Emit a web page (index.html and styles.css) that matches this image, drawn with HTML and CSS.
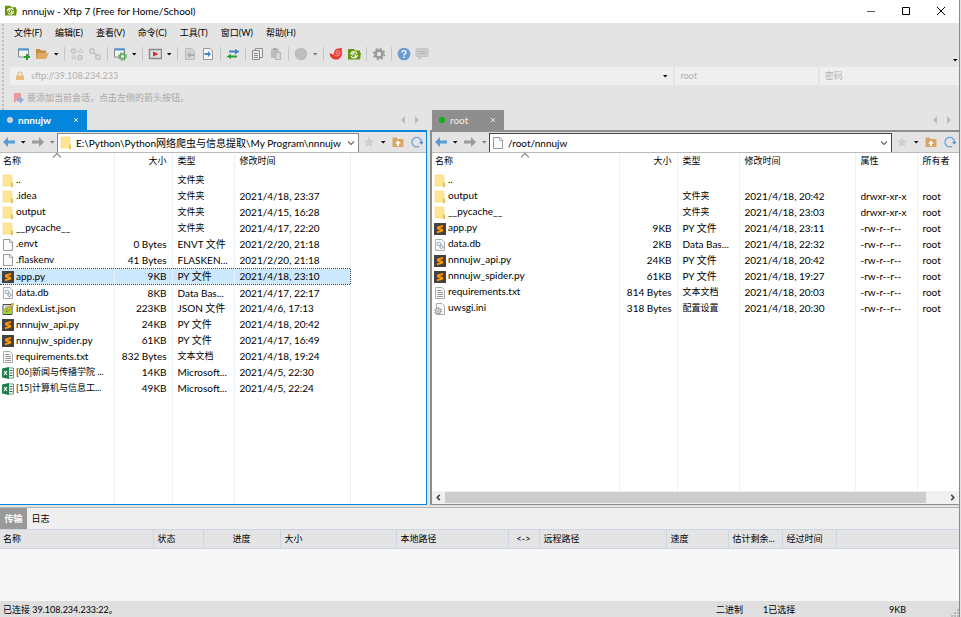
FILE: index.html
```
<!DOCTYPE html>
<html lang="zh-CN">
<head>
    <meta charset="UTF-8">
    <meta name="viewport" content="width=device-width, initial-scale=1.0">
    <title>nnnujw - Xftp 7 (Free for Home/School)</title>
    <link rel="stylesheet" href="styles.css">
</head>
<body>
    <!-- Shared icons -->
    <svg class="sprite">
        <symbol id="xftp" viewBox="0 0 14 14"><path d="M1 2h6l1 1.500h5v2l1 .5-1 6.500H1z" fill="#69960a"/><circle cx="7" cy="7.800" r="3.200" fill="none" stroke="#fff" stroke-width="1.200" stroke-dasharray="8.500 1.500"/><path d="M5.800 8.500V6.300h1.500M8.300 7v2.200H7" fill="none" stroke="#fff" stroke-width="1.100"/></symbol>
        <symbol id="caret" viewBox="0 0 6 6"><path d="M1 2h4.500L3.200 4.500z" fill="currentColor"/></symbol>
        <symbol id="folder" viewBox="0 0 12 14"><path d="M1 1h9v11H1z" fill="#ffe594"/><path d="M1 1h9v11H1z" fill="none" stroke="#f5d77b" stroke-width=".6"/><path d="M9.500 8.500h1.500V13H9z" fill="#e8bd4a"/></symbol>
        <symbol id="file" viewBox="0 0 12 14"><path d="M1.500 1.500H8L10.500 4v8.500h-9z" fill="#fbfbfb" stroke="#999"/><path d="M7.500 1.500v3h3" fill="none" stroke="#999" stroke-width=".8"/></symbol>
        <symbol id="py" viewBox="0 0 12 14"><path d="M0 1h12v12H0z" fill="#434343"/><path d="M9 3v2L5.500 6 9 7v2.500l-6 1.800v-2l3.300-1L3 7.200V4.800z" fill="#ff9800"/></symbol>
        <symbol id="db" viewBox="0 0 12 14"><path d="M1.500 1.500H8L10.500 4v8.500h-9z" fill="#fbfbfb" stroke="#aaa"/><circle cx="5" cy="6" r="1.700" fill="none" stroke="#87a3b5" stroke-width="1.400" stroke-dasharray="1 .5"/><circle cx="7.500" cy="9" r="1.500" fill="none" stroke="#8a9399" stroke-width="1.200" stroke-dasharray="1 .5"/></symbol>
        <symbol id="ini" viewBox="0 0 12 14"><path d="M2.500 1.500H8L10.500 4v8.500h-8z" fill="#fbfbfb" stroke="#aaa"/><circle cx="4" cy="9" r="3" fill="#ddd" stroke="#8a9399" stroke-width="1.600" stroke-dasharray="1.500 .8"/><circle cx="4" cy="9" r="1" fill="#fff" stroke="#888" stroke-width=".6"/></symbol>
        <symbol id="txt" viewBox="0 0 12 14"><path d="M1.500 1.500H8L10.500 4v8.500h-9z" fill="#fbfbfb" stroke="#aaa"/><path d="M3 4.500h5M3 6.500h6M3 8.500h6M3 10.500h6" stroke="#999"/></symbol>
        <symbol id="json" viewBox="0 0 12 14"><path d="M1 2.500h9v10H1z" fill="#fff" stroke="#444"/><path d="M1.500 6h8v6h-8z" fill="#9bd33c"/><path d="M2 2v1.500M4 2v1.500M6 2v1.500M3 5h5" stroke="#555" stroke-width=".8"/><path d="M4 10l1-3 5.500-6 1.300 1.300L6.500 8.500z" fill="#f7c934" stroke="#7a5a20" stroke-width=".6"/></symbol>
        <symbol id="xls" viewBox="0 0 12 14"><path d="M5.500 2h6v10h-6z" fill="#fff" stroke="#1f7244" stroke-width=".7"/><path d="M7.500 4.500h3M7.500 7h3M7.500 9.500h3" stroke="#1f7244"/><path d="M0 2.500L7 1v12l-7-1.500z" fill="#1f7f4b"/><path d="M2 5l3 4M5 5L2 9" stroke="#fff" stroke-width="1.200"/></symbol>
        <symbol id="back" viewBox="0 0 12 12"><path d="M0 6l5-5v3.500h7v3H5V11z" fill="currentColor"/></symbol>
        <symbol id="star" viewBox="0 0 12 12"><path d="M6 1l1.500 3.500 3.800.3-2.900 2.500.9 3.800L6 9.100l-3.300 2 .9-3.800L.7 4.800l3.800-.3z" fill="#cdcdcd"/></symbol>
        <symbol id="up" viewBox="0 0 12 12"><path d="M.5 1.500h4l1 1.500h6v8H.5z" fill="#d9a562"/><path d="M6 4.500L9 7.500H7V10H5V7.500H3z" fill="#fff"/></symbol>
        <symbol id="refresh" viewBox="0 0 12 12"><path d="M8 10.400A4.800 4.800 0 1 1 10.600 6" fill="none" stroke="#70a6d6" stroke-width="1.300"/><path d="M8 5.800h4.500l-2.200 3z" fill="#4b8fd0"/></symbol>
        <symbol id="chevron" viewBox="0 0 10 10"><path d="M2 3.500l3 3 3-3" fill="none" stroke="#666" stroke-width="1.100"/></symbol>
        <symbol id="cross" viewBox="0 0 6 6"><path d="M1 1l4 4M5 1L1 5" stroke="currentColor" stroke-width=".9"/></symbol>
        <symbol id="link" viewBox="0 0 14 14"><g fill="none" stroke="#c2c2c2" stroke-width="1.400"><circle cx="4" cy="4" r="2.300"/><circle cx="10" cy="10" r="2.300"/><path d="M5.500 5.500l3 3"/></g></symbol>
        <symbol id="unlink" viewBox="0 0 14 14"><g fill="none" stroke="#c2c2c2" stroke-width="1.400"><circle cx="3.500" cy="4" r="2"/><circle cx="10.500" cy="4" r="1.600" stroke-dasharray="2 1"/><circle cx="10" cy="10.500" r="2"/><circle cx="4" cy="10.500" r="1.600" stroke-dasharray="2 1"/></g></symbol>
    </svg>

    <header class="titlebar">
        <svg class="icon"><use href="#xftp"/></svg>
        <h1>nnnujw - Xftp 7 (Free for Home/School)</h1>
        <div class="window-buttons">
            <button aria-label="最小化"><svg viewBox="0 0 10 10"><path d="M1 5.500h8" stroke="#555"/></svg></button>
            <button aria-label="最大化"><svg viewBox="0 0 10 10"><path d="M1.500 1.500h7v7h-7z" fill="none" stroke="#000"/></svg></button>
            <button aria-label="关闭"><svg viewBox="0 0 10 10"><path d="M1 1l8 8M9 1L1 9" stroke="#000"/></svg></button>
        </div>
    </header>

    <div class="rebar">
        <nav class="menubar">
            <button>文件(F)</button>
            <button>编辑(E)</button>
            <button>查看(V)</button>
            <button>命令(C)</button>
            <button>工具(T)</button>
            <button>窗口(W)</button>
            <button>帮助(H)</button>
        </nav>

        <div class="toolbar">
            <button class="tool" aria-label="新建"><svg viewBox="0 0 14 14"><path d="M1.500 2h10v8h-10z" fill="#f4f4f4" stroke="#888"/><path d="M1 1.500h11v2H1z" fill="#4e94cf"/><path d="M7 10h6M10 7v6" stroke="#1fa32d" stroke-width="2"/></svg></button>
            <button class="tool" aria-label="打开"><svg viewBox="0 0 14 14"><path d="M1 2h4l1 1.500h5V11H1z" fill="#c69045"/><path d="M3 6h11l-3 6H1z" fill="#dfaa66"/></svg></button>
            <button class="drop" aria-label="打开菜单"><svg><use href="#caret"/></svg></button>
            <span class="sep"></span>
            <button class="tool" aria-label="断开"><svg><use href="#unlink"/></svg></button>
            <button class="tool" aria-label="重新连接"><svg><use href="#link"/></svg></button>
            <span class="sep"></span>
            <button class="tool" aria-label="属性"><svg viewBox="0 0 14 14"><path d="M1.500 2h10v8h-10z" fill="#f4f4f4" stroke="#888"/><path d="M1 1.500h11v2H1z" fill="#4e94cf"/><circle cx="9.500" cy="9.500" r="2.500" fill="#e5e5e5" stroke="#57a957" stroke-width="1.600"/><circle cx="9.500" cy="9.500" r="3.800" fill="none" stroke="#57a957" stroke-width="1.200" stroke-dasharray="1.500 1.500"/></svg></button>
            <button class="drop" aria-label="属性菜单"><svg><use href="#caret"/></svg></button>
            <span class="sep"></span>
            <button class="tool" aria-label="运行"><svg viewBox="0 0 14 14"><path d="M1.500 2.500h12v9h-12z" fill="#e0e0e0" stroke="#888" stroke-width="1.400"/><path d="M5 4.500L10.500 7 5 9.500z" fill="#dc2626"/></svg></button>
            <button class="drop" aria-label="运行菜单"><svg><use href="#caret"/></svg></button>
            <span class="sep"></span>
            <button class="tool" aria-label="向左传输"><svg viewBox="0 0 14 14"><path d="M2.500 1.500H9L11.500 4v8.500h-9z" fill="#d3d3d3" stroke="#bcbcbc"/><path d="M4 8l3-3v2h4v2H7v2z" fill="#aaa"/></svg></button>
            <button class="tool" aria-label="向右传输"><svg viewBox="0 0 14 14"><path d="M2.500 1.500H9L11.500 4v8.500h-9z" fill="#f6f6f6" stroke="#999"/><path d="M10 7L7 4v2H3.500v2H7v2z" fill="#3d88cc"/></svg></button>
            <span class="sep"></span>
            <button class="tool" aria-label="同步"><svg viewBox="0 0 14 14"><path d="M3 3.500h6V2l4.500 2.500L9 7.500V5.500H3z" fill="#3d85c8"/><path d="M11 8.500H5V7L.5 9.500 5 12v-1.500h6z" fill="#2f9b35"/></svg></button>
            <span class="sep"></span>
            <button class="tool" aria-label="复制"><svg viewBox="0 0 14 14"><path d="M4.500 1.500h7v9h-7z" fill="#e9e9e9" stroke="#8e8e8e"/><path d="M1.500 3.500h7v9h-7z" fill="#e9e9e9" stroke="#8e8e8e"/><path d="M3 6.500h4M3 8.500h4M3 10.500h4" stroke="#8e8e8e"/></svg></button>
            <button class="tool" aria-label="粘贴"><svg viewBox="0 0 14 14"><path d="M2 2h8v9H2z" fill="#bdbdbd"/><path d="M4 1h4v2H4z" fill="#aaa"/><path d="M6.500 5.500h5v7h-5z" fill="#d6d6d6" stroke="#b4b4b4"/></svg></button>
            <span class="sep"></span>
            <button class="tool" aria-label="传输模式"><svg viewBox="0 0 14 14"><circle cx="7" cy="7" r="6.300" fill="#bdbdbd"/></svg></button>
            <button class="drop dim" aria-label="传输模式菜单"><svg><use href="#caret"/></svg></button>
            <span class="sep"></span>
            <button class="tool" aria-label="Xshell"><svg viewBox="0 0 14 14"><path d="M.5 6.500c2-.3 3 1.200 4.500 1C4.700 4 6.500 1.500 9.500 1.500c1.500 0 2-.5 3.500-.5l-.5 2c2 4.500-1 9.500-5.500 9.500-3.500 0-6-2.500-6.500-6z" fill="#e8352e"/><path d="M5.500 7.500c.5 2.500 5.500 2 5.500-1.500 0-3-4-3-4-.3 0 1.800 2.500 1.500 2.300 0" fill="none" stroke="#f6b9b5"/></svg></button>
            <button class="tool" aria-label="Xftp"><svg><use href="#xftp"/></svg></button>
            <span class="sep"></span>
            <button class="tool" aria-label="选项"><svg viewBox="0 0 14 14"><circle cx="7" cy="7" r="3.500" fill="none" stroke="#999" stroke-width="2.600"/><circle cx="7" cy="7" r="5.400" fill="none" stroke="#999" stroke-width="1.500" stroke-dasharray="2.100 2.140"/></svg></button>
            <span class="sep"></span>
            <button class="tool" aria-label="帮助"><svg viewBox="0 0 14 14"><circle cx="7" cy="7" r="6.300" fill="#6a9cd2"/><path d="M5 5.500C5 3 9 3 9 5.300 9 6.800 7 6.800 7 8.500M7 9.500v1.500" fill="none" stroke="#fff" stroke-width="1.400"/></svg></button>
            <button class="tool" aria-label="反馈"><svg viewBox="0 0 14 14"><path d="M2 1.500h10q1 0 1 1v6q0 1-1 1H7L4 12.500v-3H2q-1 0-1-1v-6q0-1 1-1z" fill="#cdcdcd" stroke="#bababa" stroke-width=".7"/><path d="M3.500 4.500h7M3.500 6.500h7" stroke="#b5b5b5"/></svg></button>
            <button class="drop overflow" aria-label="工具栏选项"><svg><use href="#caret"/></svg></button>
        </div>

        <form class="address-bar">
            <label class="field host">
                <svg class="lock" viewBox="0 0 10 10"><path d="M3 5V3a2 2 0 0 1 4 0v2" fill="none" stroke="#dcbc8c" stroke-width="1.200"/><path d="M1 4.500h8V9H1z" fill="#edbc7d"/></svg>
                <input type="text" aria-label="主机" value="sftp://39.108.234.233">
                <button type="button" class="drop" aria-label="主机列表"><svg><use href="#caret"/></svg></button>
            </label>
            <label class="field user"><input type="text" aria-label="用户名" placeholder="root"></label>
            <label class="field pass"><input type="password" aria-label="密码" placeholder="密码"></label>
        </form>

        <div class="bookmark-bar">
            <svg class="flag" viewBox="0 0 12 12"><path d="M1 1h7v9L4.500 7.500 1 11z" fill="#e89aa0"/><path d="M4 6.500h3v-2L11 8l-4 3.500v-2H4z" fill="#8fb0d4"/></svg>
            <span>要添加当前会话，点击左侧的箭头按钮。</span>
        </div>
    </div>

    <main class="panes">
        <section class="pane local">
            <div class="tab-row">
                <div class="tab"><i class="dot"></i><span>nnnujw</span><button aria-label="关闭标签"><svg><use href="#cross"/></svg></button></div>
                <button class="scroll-tab" aria-label="上一个"><svg viewBox="0 0 6 8"><path d="M5 0v8L1 4z"/></svg></button>
                <button class="scroll-tab" aria-label="下一个"><svg viewBox="0 0 6 8"><path d="M1 0v8l4-4z"/></svg></button>
            </div>
            <div class="pane-body">
                <div class="nav-row">
                    <button class="nav blue" aria-label="后退"><svg><use href="#back"/></svg></button>
                    <button class="drop" aria-label="后退历史"><svg><use href="#caret"/></svg></button>
                    <button class="nav forward" aria-label="前进"><svg><use href="#back"/></svg></button>
                    <button class="drop dim" aria-label="前进历史"><svg><use href="#caret"/></svg></button>
                    <label class="path">
                        <svg class="file-icon"><use href="#folder"/></svg>
                        <input type="text" aria-label="本地路径" value="E:\Python\Python网络爬虫与信息提取\My Program\nnnujw">
                        <button type="button" aria-label="路径列表"><svg><use href="#chevron"/></svg></button>
                    </label>
                    <button class="nav" aria-label="收藏"><svg><use href="#star"/></svg></button>
                    <button class="drop" aria-label="收藏列表"><svg><use href="#caret"/></svg></button>
                    <button class="nav" aria-label="上级目录"><svg><use href="#up"/></svg></button>
                    <button class="nav" aria-label="刷新"><svg><use href="#refresh"/></svg></button>
                </div>
                <div class="list">
                    <table class="files">
                        <colgroup><col class="c-name-local"><col class="c-size"><col class="c-type"><col class="c-date"><col></colgroup>
                        <thead><tr><th class="sorted">名称</th><th class="size">大小</th><th>类型</th><th>修改时间</th><th></th></tr></thead>
                        <tbody>
                            <tr><td><svg class="file-icon"><use href="#folder"/></svg>..</td><td class="size"></td><td class="zh">文件夹</td><td></td><td></td></tr>
                            <tr><td><svg class="file-icon"><use href="#folder"/></svg>.idea</td><td class="size"></td><td class="zh">文件夹</td><td>2021/4/18, 23:37</td><td></td></tr>
                            <tr><td><svg class="file-icon"><use href="#folder"/></svg>output</td><td class="size"></td><td class="zh">文件夹</td><td>2021/4/15, 16:28</td><td></td></tr>
                            <tr><td><svg class="file-icon"><use href="#folder"/></svg>__pycache__</td><td class="size"></td><td class="zh">文件夹</td><td>2021/4/17, 22:20</td><td></td></tr>
                            <tr><td><svg class="file-icon"><use href="#file"/></svg>.envt</td><td class="size">0 Bytes</td><td>ENVT 文件</td><td>2021/2/20, 21:18</td><td></td></tr>
                            <tr><td><svg class="file-icon"><use href="#file"/></svg>.flaskenv</td><td class="size">41 Bytes</td><td>FLASKEN...</td><td>2021/2/20, 21:18</td><td></td></tr>
                            <tr class="selected"><td><svg class="file-icon"><use href="#py"/></svg>app.py</td><td class="size">9KB</td><td>PY 文件</td><td>2021/4/18, 23:10</td><td></td></tr>
                            <tr><td><svg class="file-icon"><use href="#db"/></svg>data.db</td><td class="size">8KB</td><td>Data Bas...</td><td>2021/4/17, 22:17</td><td></td></tr>
                            <tr><td><svg class="file-icon"><use href="#json"/></svg>indexList.json</td><td class="size">223KB</td><td>JSON 文件</td><td>2021/4/6, 17:13</td><td></td></tr>
                            <tr><td><svg class="file-icon"><use href="#py"/></svg>nnnujw_api.py</td><td class="size">24KB</td><td>PY 文件</td><td>2021/4/18, 20:42</td><td></td></tr>
                            <tr><td><svg class="file-icon"><use href="#py"/></svg>nnnujw_spider.py</td><td class="size">61KB</td><td>PY 文件</td><td>2021/4/17, 16:49</td><td></td></tr>
                            <tr><td><svg class="file-icon"><use href="#txt"/></svg>requirements.txt</td><td class="size">832 Bytes</td><td class="zh">文本文档</td><td>2021/4/18, 19:24</td><td></td></tr>
                            <tr><td class="zh"><svg class="file-icon"><use href="#xls"/></svg>[06]新闻与传播学院 ...</td><td class="size">14KB</td><td>Microsoft...</td><td>2021/4/5, 22:30</td><td></td></tr>
                            <tr><td class="zh"><svg class="file-icon"><use href="#xls"/></svg>[15]计算机与信息工...</td><td class="size">49KB</td><td>Microsoft...</td><td>2021/4/5, 22:24</td><td></td></tr>
                            <tr class="rest"><td></td><td></td><td></td><td></td><td></td></tr>
                        </tbody>
                    </table>
                </div>
            </div>
        </section>

        <section class="pane remote">
            <div class="tab-row">
                <div class="tab"><i class="dot"></i><span>root</span><button aria-label="关闭标签"><svg><use href="#cross"/></svg></button></div>
                <button class="scroll-tab" aria-label="上一个"><svg viewBox="0 0 6 8"><path d="M5 0v8L1 4z"/></svg></button>
                <button class="scroll-tab" aria-label="下一个"><svg viewBox="0 0 6 8"><path d="M1 0v8l4-4z"/></svg></button>
            </div>
            <div class="pane-body">
                <div class="nav-row">
                    <button class="nav blue" aria-label="后退"><svg><use href="#back"/></svg></button>
                    <button class="drop" aria-label="后退历史"><svg><use href="#caret"/></svg></button>
                    <button class="nav forward" aria-label="前进"><svg><use href="#back"/></svg></button>
                    <button class="drop dim" aria-label="前进历史"><svg><use href="#caret"/></svg></button>
                    <label class="path">
                        <svg class="file-icon"><use href="#file"/></svg>
                        <input type="text" aria-label="远程路径" value="/root/nnnujw">
                        <button type="button" aria-label="路径列表"><svg><use href="#chevron"/></svg></button>
                    </label>
                    <button class="nav" aria-label="收藏"><svg><use href="#star"/></svg></button>
                    <button class="drop" aria-label="收藏列表"><svg><use href="#caret"/></svg></button>
                    <button class="nav" aria-label="上级目录"><svg><use href="#up"/></svg></button>
                    <button class="nav" aria-label="刷新"><svg><use href="#refresh"/></svg></button>
                </div>
                <div class="list">
                    <table class="files">
                        <colgroup><col class="c-name-remote"><col class="c-size"><col class="c-type"><col class="c-date"><col class="c-type"><col></colgroup>
                        <thead><tr><th class="sorted">名称</th><th class="size">大小</th><th>类型</th><th>修改时间</th><th>属性</th><th>所有者</th></tr></thead>
                        <tbody>
                            <tr><td><svg class="file-icon"><use href="#folder"/></svg>..</td><td class="size"></td><td></td><td></td><td></td><td></td></tr>
                            <tr><td><svg class="file-icon"><use href="#folder"/></svg>output</td><td class="size"></td><td class="zh">文件夹</td><td>2021/4/18, 20:42</td><td>drwxr-xr-x</td><td>root</td></tr>
                            <tr><td><svg class="file-icon"><use href="#folder"/></svg>__pycache__</td><td class="size"></td><td class="zh">文件夹</td><td>2021/4/18, 23:03</td><td>drwxr-xr-x</td><td>root</td></tr>
                            <tr><td><svg class="file-icon"><use href="#py"/></svg>app.py</td><td class="size">9KB</td><td>PY 文件</td><td>2021/4/18, 23:11</td><td>-rw-r--r--</td><td>root</td></tr>
                            <tr><td><svg class="file-icon"><use href="#db"/></svg>data.db</td><td class="size">2KB</td><td>Data Bas...</td><td>2021/4/18, 22:32</td><td>-rw-r--r--</td><td>root</td></tr>
                            <tr><td><svg class="file-icon"><use href="#py"/></svg>nnnujw_api.py</td><td class="size">24KB</td><td>PY 文件</td><td>2021/4/18, 20:42</td><td>-rw-r--r--</td><td>root</td></tr>
                            <tr><td><svg class="file-icon"><use href="#py"/></svg>nnnujw_spider.py</td><td class="size">61KB</td><td>PY 文件</td><td>2021/4/18, 19:27</td><td>-rw-r--r--</td><td>root</td></tr>
                            <tr><td><svg class="file-icon"><use href="#txt"/></svg>requirements.txt</td><td class="size">814 Bytes</td><td class="zh">文本文档</td><td>2021/4/18, 20:03</td><td>-rw-r--r--</td><td>root</td></tr>
                            <tr><td><svg class="file-icon"><use href="#ini"/></svg>uwsgi.ini</td><td class="size">318 Bytes</td><td class="zh">配置设置</td><td>2021/4/18, 20:30</td><td>-rw-r--r--</td><td>root</td></tr>
                            <tr class="rest"><td></td><td></td><td></td><td></td><td></td><td></td></tr>
                        </tbody>
                    </table>
                </div>
                <div class="hscroll">
                    <svg viewBox="0 0 10 10"><path d="M6 3L4 5l2 2" fill="none" stroke="#444" stroke-width="1.200"/></svg>
                    <div class="track"><div class="thumb"></div></div>
                    <svg viewBox="0 0 10 10"><path d="M4 3l2 2-2 2" fill="none" stroke="#444" stroke-width="1.200"/></svg>
                </div>
            </div>
        </section>
    </main>

    <section class="transfers">
        <div class="bottom-tabs">
            <button class="active">传输</button>
            <button>日志</button>
        </div>
        <table class="queue">
            <colgroup><col class="q-name"><col class="q-state"><col class="q-progress"><col class="q-size"><col class="q-local"><col class="q-dir"><col class="q-remote"><col class="q-speed"><col class="q-time"><col class="q-time"><col></colgroup>
            <thead><tr><th>名称</th><th>状态</th><th class="center">进度</th><th>大小</th><th>本地路径</th><th class="center">&lt;-&gt;</th><th>远程路径</th><th>速度</th><th>估计剩余...</th><th>经过时间</th><th></th></tr></thead>
        </table>
    </section>

    <footer class="statusbar">
        <span class="connection">已连接 39.108.234.233:22。</span>
        <span class="mode">二进制</span>
        <span class="count">1已选择</span>
        <span class="bytes">9KB</span>
        <svg class="grip" viewBox="0 0 8 8"><path d="M6 0h2v2H6zM3 3h2v2H3zM6 3h2v2H6zM0 6h2v2H0zM3 6h2v2H3zM6 6h2v2H6z" fill="#b8b8b8"/></svg>
    </footer>
</body>
</html>
```
FILE: styles.css
```
* {
    box-sizing: border-box;
}

html {
    background-color: #e4e4e4;
}

body {
    display: flex;
    flex-direction: column;
    height: 100vh;
    margin: 0 1px 0 0;
    overflow: hidden;
    border-right: 1px solid #8a8a8a;
    color: #000;
    font-family: Lato, "Noto Sans CJK SC", sans-serif;
    font-size: 10px;
    line-height: 16px;
}

button,
input {
    margin: 0;
    padding: 0;
    border: 0;
    background: none;
    color: inherit;
    font: inherit;
}

svg {
    display: block;
    flex: none;
}

.sprite {
    position: absolute;
    width: 0;
    height: 0;
}

/* Title bar */
.titlebar {
    display: flex;
    align-items: center;
    gap: 5px;
    height: 23px;
    padding: 0 1px 2px 4px;
    background-color: #fff;
}

.titlebar h1 {
    flex: 1;
    margin: 0;
    font-size: 10px;
    font-weight: normal;
}

.icon {
    width: 13px;
    height: 13px;
}

.window-buttons {
    display: flex;
}

.window-buttons button {
    display: flex;
    justify-content: center;
    width: 35px;
}

.window-buttons svg {
    width: 10px;
    height: 10px;
}

/* Menu, toolbar and address bar */
.rebar {
    padding-left: 10px;
    background: radial-gradient(circle, #bbb 1px, transparent 1px) 1px 0 / 4px 4px repeat-y;
}

.menubar {
    display: flex;
    gap: 13px;
    height: 20px;
    padding-left: 4px;
    font-size: 9px;
    align-items: center;
}

.toolbar {
    display: flex;
    align-items: center;
    height: 22px;
    padding-left: 5px;
}

.tool {
    padding: 0 2px;
}

.tool svg {
    width: 14px;
    height: 14px;
}

.drop {
    padding: 0 2px;
}

.drop svg {
    width: 6px;
    height: 6px;
}

.dim {
    color: #777;
}

.overflow {
    align-self: flex-end;
    margin-left: auto;
    padding: 2px 1px;
}

.sep {
    width: 1px;
    height: 14px;
    margin: 0 3px;
    background-color: #c6c6c6;
}

.address-bar {
    display: flex;
    gap: 2px;
    margin-top: 2px;
    color: #b0b0b0;
    font-size: 9px;
}

.field {
    display: flex;
    align-items: center;
    height: 18px;
    padding: 0 5px;
    background-color: #efefef;
}

.field input {
    flex: 1;
    min-width: 0;
}

.field input::placeholder {
    color: #b0b0b0;
    opacity: 1;
}

.field .drop {
    padding: 0;
    color: #000;
}

.host {
    flex: 652;
}

.user {
    flex: 132;
}

.pass {
    flex: 129;
}

.lock {
    width: 10px;
    height: 10px;
    margin-right: 6px;
}

.bookmark-bar {
    display: flex;
    align-items: center;
    gap: 2px;
    height: 25px;
    padding-left: 3px;
    color: #a8a8a8;
    font-size: 9px;
}

.flag {
    width: 12px;
    height: 12px;
}

/* Panes */
.panes {
    display: flex;
    flex: 1;
    gap: 3px;
    min-height: 0;
}

.pane {
    display: flex;
    flex-direction: column;
    min-width: 0;
}

.local {
    --accent: #0486dc;
    flex: 427;
}

.remote {
    --accent: #8e8e8e;
    flex: 529;
}

.tab-row {
    display: flex;
    align-items: center;
    height: 20px;
    padding-right: 3px;
}

.tab {
    display: flex;
    align-items: center;
    height: 20px;
    margin-right: auto;
    padding: 0 8px 0 7px;
    background-color: var(--accent);
    color: #fff;
}

.local .tab {
    width: 87px;
    font-weight: bold;
}

.remote .tab {
    width: 72px;
    margin-left: 2px;
    color: #eee;
}

.tab span {
    flex: 1;
}

.tab button svg {
    width: 6px;
    height: 6px;
}

.dot {
    width: 6px;
    height: 6px;
    margin-right: 5px;
    border-radius: 50%;
    background-color: #d4d4d4;
}

.remote .dot {
    background-color: #0db514;
}

.scroll-tab {
    padding: 0 4px;
}

.scroll-tab svg {
    width: 6px;
    height: 8px;
    fill: #bbb;
}

.pane-body {
    display: flex;
    flex: 1;
    flex-direction: column;
    min-height: 0;
    border: 1px solid var(--accent);
    border-top-width: 2px;
}

.local .pane-body {
    border-left: 0;
}

.remote .pane-body {
    border-right: 0;
    border-left-width: 2px;
}

.nav-row {
    display: flex;
    align-items: center;
    height: 21px;
    padding-left: 3px;
    border-bottom: 1px solid #bbb;
}

.nav {
    padding: 0 3px 0 4px;
    color: #9b9b9b;
}

.nav:first-child {
    padding-left: 0;
}

.nav svg {
    width: 12px;
    height: 12px;
}

.blue {
    color: #5a9bd4;
}

.forward svg {
    transform: scaleX(-1);
}

.path {
    display: flex;
    flex: 1;
    align-items: center;
    height: 19px;
    min-width: 0;
    padding: 0 2px;
    background-color: #fff;
    border: 1px solid #888;
    border-bottom: 0;
}

.remote .path {
    border-color: #444;
}

.path input {
    flex: 1;
    min-width: 0;
    margin-left: 2px;
}

.path button svg {
    width: 10px;
    height: 10px;
}

.file-icon {
    display: inline-block;
    width: 12px;
    height: 14px;
    margin-right: 2px;
    vertical-align: middle;
}

.list {
    flex: 1;
    min-height: 0;
    overflow: hidden;
    background-color: #fff;
}

table {
    width: 100%;
    border-collapse: collapse;
    table-layout: fixed;
}

.files {
    height: 100%;
}

.files th {
    height: 19px;
    padding: 0 5px;
    font-size: 9px;
    font-weight: normal;
    text-align: left;
    vertical-align: top;
}

.files th + th,
.files td + td {
    border-left: 1px solid #e9f1fa;
}

.files td {
    height: 16px;
    padding: 0 5px;
    line-height: 14px;
    overflow: hidden;
    white-space: nowrap;
}

.files td:first-child {
    padding: 0 0 0 2px;
}

.files .size {
    text-align: right;
}

.files .zh {
    font-size: 9px;
}

.files .sorted {
    position: relative;
    padding-left: 3px;
}

.sorted::before {
    content: "";
    position: absolute;
    top: 1px;
    left: 50%;
    width: 5px;
    height: 5px;
    border: 1px solid #777;
    border-width: 1px 0 0 1px;
    transform: translateX(-50%) rotate(45deg);
}

.selected td:not(:last-child) {
    background-color: #cce8ff;
    border-top: 1px dotted #345;
    border-bottom: 1px dotted #345;
}

.selected td:last-child {
    border-left: 1px dotted #345;
}

/* Empty row that carries the column lines down to the bottom */
.rest {
    height: 100%;
}

.c-name-local {
    width: 114px;
}

.c-name-remote {
    width: 187px;
}

.c-size {
    width: 58px;
}

.c-type {
    width: 62px;
}

.c-date {
    width: 116px;
}

.hscroll {
    display: flex;
    align-items: center;
    height: 13px;
    background-color: #f0f0f0;
}

.hscroll svg {
    width: 13px;
    height: 13px;
}

.track {
    flex: 1;
}

.thumb {
    width: 96%;
    height: 11px;
    background-color: #cdcdcd;
}

/* Transfer queue */
.transfers {
    height: 94px;
    margin-top: 2px;
    background-color: #f7f7f7;
    border-top: 1px solid #b5b5b5;
}

.bottom-tabs {
    display: flex;
    height: 21px;
    background-color: #efefef;
    font-size: 9px;
}

.bottom-tabs button {
    width: 27px;
}

.bottom-tabs .active {
    background-color: #999;
    color: #fff;
    font-weight: bold;
}

.queue th {
    height: 19px;
    padding: 0 4px;
    background-color: #e4e4e4;
    border: 1px solid #ccd6e2;
    border-width: 1px 0 1px 1px;
    font-size: 9px;
    font-weight: normal;
    text-align: left;
    white-space: nowrap;
}

.queue th:first-child {
    padding-left: 3px;
    border-left: 0;
}

.queue .center {
    text-align: center;
}

.q-name { width: 153px; }
.q-state { width: 50px; }
.q-progress { width: 77px; }
.q-size { width: 116px; }
.q-local { width: 112px; }
.q-dir { width: 31px; }
.q-remote { width: 127px; }
.q-speed { width: 62px; }
.q-time { width: 54px; }

/* Status bar */
.statusbar {
    display: flex;
    align-items: center;
    height: 16px;
    padding: 1px 0 0 3px;
    background-color: #dfdfdf;
    font-size: 9px;
}

.connection {
    flex: 1;
}

.mode {
    width: 47px;
}

.count {
    width: 126px;
}

.bytes {
    width: 62px;
}

.grip {
    align-self: flex-end;
    width: 8px;
    height: 8px;
}
```
